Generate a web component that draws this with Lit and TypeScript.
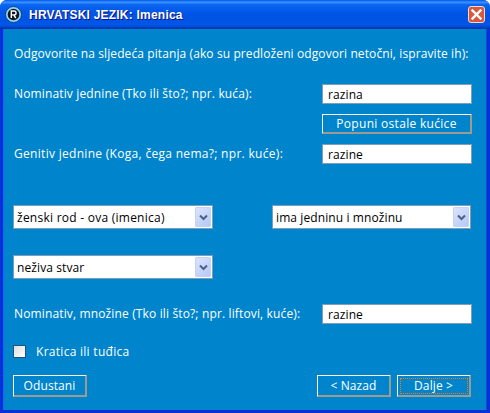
import { LitElement, html, css } from "lit";
import { customElement } from "lit/decorators.js";

const chevron = html`<svg class="chev" width="9" height="7" viewBox="0 0 9 7"><path d="M1 1.5 L4.5 5 L8 1.5" fill="none" stroke="#4d6185" stroke-width="2"/></svg>`;

@customElement("app-root")
export class AppRoot extends LitElement {
  static styles = css`
    :host { display: block; width: 490px; height: 413px; font-family: "Open Sans", sans-serif; font-size: 12px; letter-spacing: 0.1px; color: #fff; overflow: hidden; }
    .win { width: 490px; height: 413px; display: flex; flex-direction: column; box-sizing: border-box; background: #0831d9; border-radius: 7px 7px 0 0; }
    .title { height: 29px; flex: none; display: flex; align-items: center; box-sizing: border-box; padding: 0 5px 0 5px; gap: 7px; border-radius: 7px 7px 0 0;
      background: linear-gradient(180deg, #0058ee 0%, #3a93ff 8%, #0a66f0 16%, #0055e5 45%, #0054e3 70%, #0157ea 85%, #0047c9 93%, #0032a8 100%); }
    .logo { width: 17px; height: 17px; flex: none; }
    .cap { font-family: "Liberation Sans", sans-serif; font-weight: 700; font-size: 12px; letter-spacing: 0.22px; text-shadow: 1px 1px 0 #0f1089; flex: 1; }
    .close { width: 17px; height: 17px; margin-top: -1px; flex: none; }
    .body { flex: 1; margin: 0 3px 3px 3px; border-left: 1px solid #166aee; border-right: 1px solid #0a4fd0; background: #0085cc; padding: 0 14px 0 9px; display: flex; flex-direction: column; box-sizing: border-box; }
    .intro { margin: 17px 0 0 1px; line-height: 15px; white-space: nowrap; }
    .row { display: flex; justify-content: space-between; align-items: center; white-space: nowrap; padding-left: 1px; }
    .label { padding-bottom: 2px; letter-spacing: 0.14px; }
    .wide { letter-spacing: 0.3px; }
    .field { width: 150px; height: 20px; box-sizing: border-box; background: #fff; border: 1px solid #7f9db9; color: #000; padding: 0 5px; display: flex; align-items: center; line-height: 15px; }
    .btn { box-sizing: border-box; display: flex; align-items: center; justify-content: center; background: #0085cc; color: #fff; border: 1px solid #fff; border-right: 2px solid #9d9a90; border-bottom: 2px solid #9d9a90; }
    .fill { width: 150px; height: 20px; margin: 10px 0 0 auto; letter-spacing: 0.3px; }
    .r1 { margin-top: 23px; }
    .r2 { margin-top: 10px; }
    .sel { height: 24px; box-sizing: border-box; background: #fff; border: 1px solid #7f9db9; color: #000; display: flex; align-items: center; justify-content: space-between; padding: 0 1px 0 3px; }
    .arrow { width: 16px; height: 20px; box-sizing: border-box; display: flex; align-items: center; justify-content: center; background: linear-gradient(135deg, #dbe4fb, #b5c8f7); border: 1px solid #c3d2f8; border-radius: 1px; }
    .selrow { display: flex; justify-content: space-between; margin: 41px 1px 0 0; }
    .s1 { width: 200px; letter-spacing: 0.25px; }
    .s2 { width: 199px; }
    .s3 { width: 200px; }
    .selrow2 { margin: 26px 0 0 0; display: flex; }
    .r3 { margin-top: 25px; }
    .check { display: flex; align-items: center; gap: 10px; margin: 21px 0 0 0; height: 13px; letter-spacing: 0.28px; }
    .box { width: 13px; height: 13px; box-sizing: border-box; border: 1px solid #1c5180; background: linear-gradient(135deg, #dcdcd7, #fff); flex: none; }
    .foot { display: flex; margin: 17px 1px 0 0; }
    .foot .btn { height: 22px; width: 74px; }
    .next { margin-left: 6px; }
    .nazad { margin-left: auto; }
    .focus { outline: 1px dotted #ee7a1c; width: 66px; height: 14px; display: flex; align-items: center; justify-content: center; }
  `;
  render() {
    return html`<div class="win">
      <div class="title">
        <svg class="logo" viewBox="0 0 17 17"><circle cx="8.5" cy="8.5" r="8" fill="#8fd4f0" stroke="#0c3f8a" stroke-width="1"/><circle cx="8.5" cy="8.5" r="5.8" fill="#101820"/><path d="M6.3 12V5h2.8a1.9 1.9 0 0 1 0 3.9H6.3M8.6 8.9 10.8 12" fill="none" stroke="#fff" stroke-width="1.4"/></svg>
        <span class="cap">HRVATSKI JEZIK: Imenica</span>
        <svg class="close" viewBox="0 0 17 17"><rect x="0.5" y="0.5" width="16" height="16" rx="2.5" fill="#d9573a" stroke="#f3d9d0"/><path d="M4.5 4.5 12.5 12.5M12.5 4.5 4.5 12.5" stroke="#fff" stroke-width="2.4" stroke-linecap="square"/></svg>
      </div>
      <div class="body">
        <div class="intro">Odgovorite na sljedeća pitanja (ako su predloženi odgovori netočni, ispravite ih):</div>
        <div class="row r1"><span class="label">Nominativ jednine (Tko ili što?; npr. kuća):</span><div class="field">razina</div></div>
        <div class="btn fill">Popuni ostale kućice</div>
        <div class="row r2"><span class="label wide">Genitiv jednine (Koga, čega nema?; npr. kuće):</span><div class="field">razine</div></div>
        <div class="selrow">
          <div class="sel s1"><span>ženski rod - ova (imenica)</span><span class="arrow">${chevron}</span></div>
          <div class="sel s2"><span>ima jedninu i množinu</span><span class="arrow">${chevron}</span></div>
        </div>
        <div class="selrow2"><div class="sel s3"><span>neživa stvar</span><span class="arrow">${chevron}</span></div></div>
        <div class="row r3"><span class="label">Nominativ, množine (Tko ili što?; npr. liftovi, kuće):</span><div class="field">razine</div></div>
        <div class="check"><span class="box"></span><span>Kratica ili tuđica</span></div>
        <div class="foot">
          <div class="btn">Odustani</div>
          <div class="btn nazad">&lt; Nazad</div>
          <div class="btn next"><span class="focus">Dalje &gt;</span></div>
        </div>
      </div>
    </div>`;
  }
}
